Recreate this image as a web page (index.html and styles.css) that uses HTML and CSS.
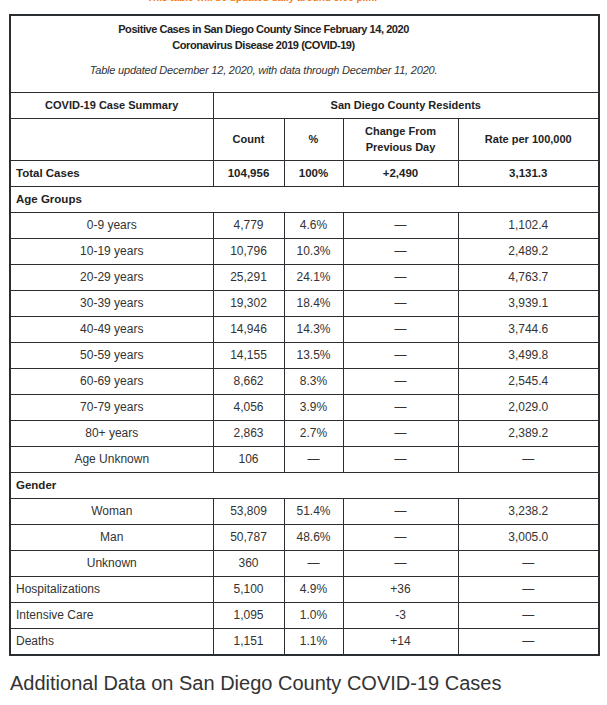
FILE: index.html
```html
<!DOCTYPE html>
<html lang="en">
<head>
<meta charset="utf-8">
<title>COVID-19 San Diego County</title>
<link rel="stylesheet" href="styles.css">
</head>
<body>
<div class="page">
  <div class="notice">This table will be updated daily around 5:00 p.m.</div>
  <table class="cases">
    <colgroup>
      <col class="c1"><col class="c2"><col class="c3"><col class="c4"><col class="c5">
    </colgroup>
    <tbody>
      <tr>
        <td colspan="5" class="title">
          <p class="title-main">Positive Cases in San Diego County Since February 14, 2020<br>Coronavirus Disease 2019 (COVID-19)</p>
          <p class="title-note">Table updated December 12, 2020, with data through December 11, 2020.</p>
        </td>
      </tr>
      <tr class="head">
        <td>COVID-19 Case Summary</td>
        <td colspan="4">San Diego County Residents</td>
      </tr>
      <tr class="head tall">
        <td></td>
        <td>Count</td>
        <td>%</td>
        <td>Change From<br>Previous Day</td>
        <td>Rate per 100,000</td>
      </tr>
      <tr class="total">
        <td class="label">Total Cases</td>
        <td>104,956</td>
        <td>100%</td>
        <td>+2,490</td>
        <td>3,131.3</td>
      </tr>
      <tr class="group"><td colspan="5" class="label">Age Groups</td></tr>
      <tr><td>0-9 years</td><td>4,779</td><td>4.6%</td><td>—</td><td>1,102.4</td></tr>
      <tr><td>10-19 years</td><td>10,796</td><td>10.3%</td><td>—</td><td>2,489.2</td></tr>
      <tr><td>20-29 years</td><td>25,291</td><td>24.1%</td><td>—</td><td>4,763.7</td></tr>
      <tr><td>30-39 years</td><td>19,302</td><td>18.4%</td><td>—</td><td>3,939.1</td></tr>
      <tr><td>40-49 years</td><td>14,946</td><td>14.3%</td><td>—</td><td>3,744.6</td></tr>
      <tr><td>50-59 years</td><td>14,155</td><td>13.5%</td><td>—</td><td>3,499.8</td></tr>
      <tr><td>60-69 years</td><td>8,662</td><td>8.3%</td><td>—</td><td>2,545.4</td></tr>
      <tr><td>70-79 years</td><td>4,056</td><td>3.9%</td><td>—</td><td>2,029.0</td></tr>
      <tr><td>80+ years</td><td>2,863</td><td>2.7%</td><td>—</td><td>2,389.2</td></tr>
      <tr><td>Age Unknown</td><td>106</td><td>—</td><td>—</td><td>—</td></tr>
      <tr class="group"><td colspan="5" class="label">Gender</td></tr>
      <tr><td>Woman</td><td>53,809</td><td>51.4%</td><td>—</td><td>3,238.2</td></tr>
      <tr><td>Man</td><td>50,787</td><td>48.6%</td><td>—</td><td>3,005.0</td></tr>
      <tr><td>Unknown</td><td>360</td><td>—</td><td>—</td><td>—</td></tr>
      <tr><td class="label">Hospitalizations</td><td>5,100</td><td>4.9%</td><td>+36</td><td>—</td></tr>
      <tr><td class="label">Intensive Care</td><td>1,095</td><td>1.0%</td><td>-3</td><td>—</td></tr>
      <tr><td class="label">Deaths</td><td>1,151</td><td>1.1%</td><td>+14</td><td>—</td></tr>
    </tbody>
  </table>
  <h2 class="more">Additional Data on San Diego County COVID-19 Cases</h2>
</div>
</body>
</html>
```

FILE: styles.css
```css
html, body {
  margin: 0;
  padding: 0;
  background: #ffffff;
}

body {
  font-family: "Liberation Sans", Arial, sans-serif;
  color: #333333;
}

.page {
  padding: 0 9px;
}

.notice {
  margin-top: -8px;
  height: 12px;
  line-height: 12px;
  padding-left: 138px;
  font-size: 10px;
  font-weight: bold;
  color: #f47b20;
  margin-bottom: 10px;
}

.cases {
  width: 589px;
  border-collapse: collapse;
  table-layout: fixed;
  border: 2px solid #2a2e33;
}

.c1 { width: 203px; }
.c2 { width: 71px; }
.c3 { width: 59px; }
.c4 { width: 115px; }
.c5 { width: 141px; }

.cases td {
  border: 1px solid #2a2e33;
  height: 25px;
  padding: 0 5px;
  text-align: center;
  vertical-align: middle;
  font-size: 12px;
  line-height: 14px;
  color: #333333;
}

.cases td.title {
  height: 77px;
  padding: 5px 82px 0 0;
  box-sizing: border-box;
  vertical-align: top;
}

.title-main {
  margin: 0;
  font-size: 11px;
  font-weight: bold;
  letter-spacing: -0.45px;
  line-height: 16px;
  color: #222222;
}

.title-note {
  margin: 10px 0 0;
  font-size: 11px;
  font-style: italic;
  letter-spacing: -0.2px;
  line-height: 14px;
  color: #333333;
}

.head td {
  font-size: 11px;
  font-weight: bold;
  color: #222222;
}

.head.tall td {
  height: 41px;
  line-height: 16px;
}

.total td {
  font-size: 11.5px;
  font-weight: bold;
  color: #222222;
}

.cases td.label {
  text-align: left;
}

.group td {
  font-size: 11.5px;
  font-weight: bold;
  color: #222222;
}

.more {
  margin: 15px 0 0 1px;
  font-size: 20px;
  font-weight: normal;
  line-height: 24px;
  color: #333333;
}
```
